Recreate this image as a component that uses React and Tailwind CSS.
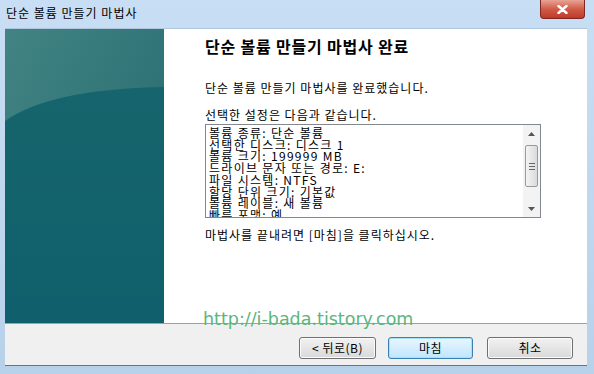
import React from 'react'

const kr = { fontFamily: '"Noto Sans CJK KR", "Noto Sans", sans-serif' }

function SidePanel() {
  return (
    <svg width="159" height="295" viewBox="0 0 159 295" className="block shrink-0">
      <defs>
        <linearGradient id="top" x1="0" y1="0" x2="1" y2="1">
          <stop offset="0" stopColor="#428483" />
          <stop offset="1" stopColor="#23676e" />
        </linearGradient>
        <linearGradient id="bot" x1="0" y1="0" x2="0" y2="1">
          <stop offset="0" stopColor="#16656d" />
          <stop offset="1" stopColor="#0f606c" />
        </linearGradient>
      </defs>
      <rect width="159" height="295" fill="url(#top)" />
      <path d="M0 92 Q45 60 159 58 L159 295 L0 295 Z" fill="url(#bot)" />
    </svg>
  )
}

function Scrollbar() {
  return (
    <div className="w-[17px] h-full bg-[#f3f3f3] flex flex-col items-center shrink-0">
      <div className="h-[17px] w-full flex items-center justify-center">
        <svg width="7" height="4" viewBox="0 0 7 4"><path d="M0 4 L3.5 0 L7 4 Z" fill="#555" /></svg>
      </div>
      <div className="mt-[3px] w-[13px] h-[42px] rounded-[2px] border border-[#9a9a9a] bg-gradient-to-r from-[#f4f4f4] to-[#dadada] flex flex-col items-center justify-center gap-[2px]">
        <div className="w-[6px] h-px bg-[#666]" />
        <div className="w-[6px] h-px bg-[#666]" />
        <div className="w-[6px] h-px bg-[#666]" />
      </div>
      <div className="flex-1" />
      <div className="h-[17px] w-full flex items-center justify-center">
        <svg width="7" height="4" viewBox="0 0 7 4"><path d="M0 0 L3.5 4 L7 0 Z" fill="#555" /></svg>
      </div>
    </div>
  )
}

function Button({ children, primary, w }) {
  return (
    <div
      className={
        'h-[22px] rounded-[3px] flex items-center justify-center text-[12px] tracking-[0.5px] text-black border ' +
        w +
        (primary
          ? ' border-[#3c7fb1] bg-gradient-to-b from-[#eaf6fd] to-[#bee6fd] shadow-[inset_0_0_0_1px_#a6e0fb]'
          : ' border-[#707070] bg-gradient-to-b from-[#f2f2f2] to-[#d9d9d9] shadow-[inset_0_0_0_1px_#fbfbfb]')
      }
      style={kr}
    >
      {children}
    </div>
  )
}

const lines = [
  '볼륨 종류: 단순 볼륨',
  '선택한 디스크: 디스크 1',
  '볼륨 크기: 199999 MB',
  '드라이브 문자 또는 경로: E:',
  '파일 시스템: NTFS',
  '할당 단위 크기: 기본값',
  '볼륨 레이블: 새 볼륨',
  '빠른 포맷: 예',
]

export default function App() {
  return (
    <div className="w-[594px] h-[374px] bg-gradient-to-b from-[#c8def4] to-[#b8d1ea] flex flex-col relative overflow-hidden" style={kr}>
      {/* title bar */}
      <div className="h-[28px] flex items-start pl-[6px] pt-[6px] text-[12px] leading-[14px] tracking-[1px] text-black">
        단순 볼륨 만들기 마법사
      </div>
      <div className="absolute left-[540px] top-0 w-[45px] h-[19px] rounded-b-[4px] border border-t-0 border-[#7a2a22] bg-gradient-to-b from-[#e7a294] via-[#d05c48] to-[#c0392b] flex items-center justify-center">
        <svg width="11" height="9" viewBox="0 0 11 9">
          <path d="M1.5 1 L9.5 8 M9.5 1 L1.5 8" stroke="#fff" strokeWidth="2.4" strokeLinecap="round" />
        </svg>
      </div>

      {/* body */}
      <div className="flex flex-1 pl-[5px] pr-[7px] pb-[8px] flex-col">
        <div className="flex h-[295px] border-t border-[#8fa5bd]/40">
          <SidePanel />
          <div className="flex-1 bg-white pl-[41px] pt-[6px] text-black">
            <div className="text-[16px] font-bold leading-[22px] tracking-[0.8px]">단순 볼륨 만들기 마법사 완료</div>
            <div className="mt-[23px] text-[12px] leading-[16px] tracking-[1px]">단순 볼륨 만들기 마법사를 완료했습니다.</div>
            <div className="mt-[11px] text-[12px] leading-[16px] tracking-[1px]">선택한 설정은 다음과 같습니다.</div>
            <div className="mt-[1px] w-[336px] h-[94px] border border-[#828790] flex">
              <div className="flex-1 pl-[3px] pt-[2px] text-[12px] leading-[11.7px] tracking-[1.3px] overflow-hidden">
                {lines.map((l) => (
                  <div key={l} className="whitespace-nowrap">{l}</div>
                ))}
              </div>
              <Scrollbar />
            </div>
            <div className="mt-[9px] text-[12px] leading-[16px] tracking-[1px]">마법사를 끝내려면 [마침]을 클릭하십시오.</div>
          </div>
        </div>
        <div className="flex-1 bg-[#f0f0f0] border-t border-[#a0a0a0] border-b border-b-[#5d7791] flex items-start justify-end pt-[13px] pr-[14px]">
          <Button w="w-[77px]">&lt; 뒤로(B)</Button>
          <div className="ml-[12px]"><Button primary w="w-[85px]">마침</Button></div>
          <div className="ml-[14px]"><Button w="w-[86px]">취소</Button></div>
        </div>
      </div>

      {/* watermark */}
      <div className="absolute left-[203px] top-[309px] text-[17.5px] leading-[20px] text-[#5cb57f]" style={{ fontFamily: 'Verdana, "DejaVu Sans", sans-serif' }}>
        http://i-bada.tistory.com
      </div>
    </div>
  )
}
